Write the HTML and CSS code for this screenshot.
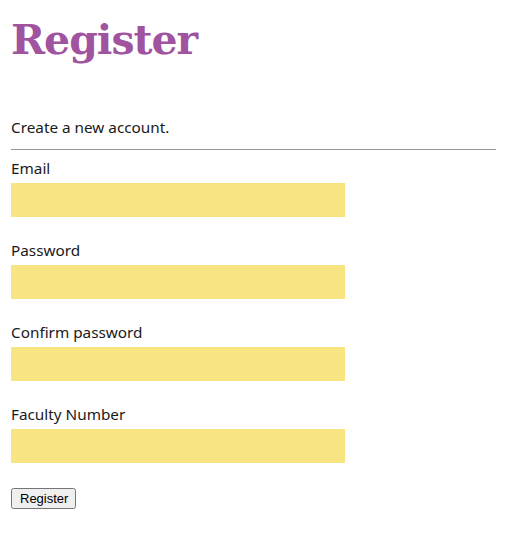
FILE: index.html
```html
<!DOCTYPE html>
<html>
<head>
<meta charset="utf-8">
<link rel="stylesheet" href="styles.css">
</head>
<body>
<div class="page">
  <h1 class="title">Register</h1>
  <p class="lead">Create a new account.</p>
  <hr class="rule">
  <form class="form">
    <div class="field">
      <label class="label">Email</label>
      <input class="input" type="text">
    </div>
    <div class="field">
      <label class="label">Password</label>
      <input class="input" type="password">
    </div>
    <div class="field">
      <label class="label">Confirm password</label>
      <input class="input" type="password">
    </div>
    <div class="field">
      <label class="label">Faculty Number</label>
      <input class="input" type="text">
    </div>
    <div class="actions">
      <button class="btn" type="button">Register</button>
    </div>
  </form>
</div>
</body>
</html>
```
FILE: styles.css
```css
html, body {
  margin: 0;
  padding: 0;
  background: #fff;
}
.page {
  padding: 0 15px 0 11px;
  font-family: "Noto Sans", "Open Sans", sans-serif;
  font-size: 15.3px;
  color: #1a1a1a;
}
.title {
  margin: 0;
  padding-top: 14px;
  height: 105px;
  box-sizing: border-box;
  font-family: "DejaVu Serif", serif;
  font-weight: bold;
  font-size: 41px;
  line-height: 52px;
  color: #a0539f;
  letter-spacing: -1px;
}
.lead {
  margin: 0;
  line-height: 22px;
  padding-top: 11px;
}
.rule {
  margin: 11px 0 8px;
  border: 0;
  border-top: 1px solid #999;
  height: 0;
}
.form {
  display: flex;
  flex-direction: column;
}
.field {
  display: flex;
  flex-direction: column;
  gap: 4px;
  margin-bottom: 23px;
}
.label {
  line-height: 21px;
}
.input {
  width: 334px;
  height: 34px;
  box-sizing: border-box;
  border: 0;
  background: #f8e483;
  margin: 0;
}
.actions {
  padding-top: 1px;
}
.btn {
  font-family: "Liberation Sans", Arial, sans-serif;
  font-size: 13px;
  height: 21px;
  padding: 1px 6px 1px 7px;
  margin: 0;
}
```
